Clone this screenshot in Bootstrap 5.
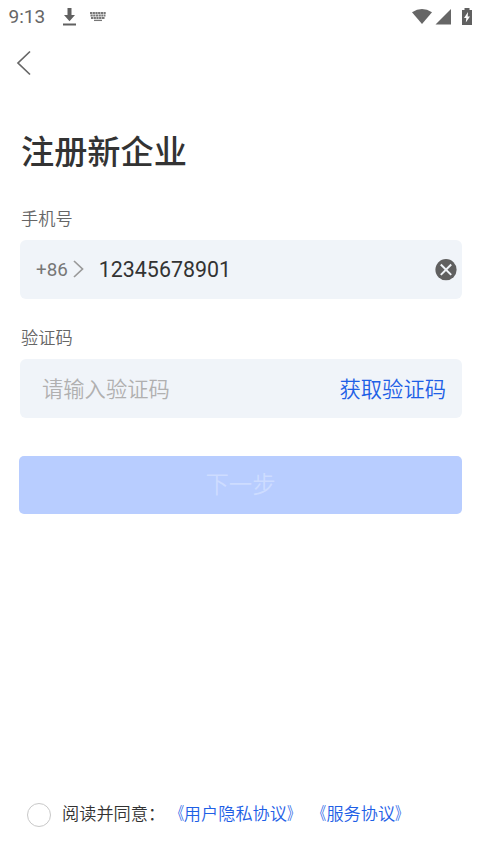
<!DOCTYPE html>
<html lang="zh-CN">
<head>
<meta charset="utf-8">
<meta name="viewport" content="width=device-width, initial-scale=1">
<title>注册新企业</title>
<link href="https://cdn.jsdelivr.net/npm/bootstrap@5.3.0/dist/css/bootstrap.min.css" rel="stylesheet">
<style>
body{font-family:Roboto,"Noto Sans CJK SC",sans-serif;color:#333;background:#fff;height:853px;overflow:hidden}
svg{display:block;flex:none}
.status-bar{height:33px;padding:0 7px 0 8.500px;color:#666}
.clock{font-size:19px;line-height:36px;width:52px}
.keyboard{margin-left:12px}
.wifi{margin-right:2px}
.signal{margin-right:9px}
.top-bar{height:60px;padding-left:16px}
.main-form{padding:0 18px 0 20px}
.page-title{font-size:33.2px;line-height:48px;font-weight:500;margin:36px 0 0;padding-left:1px}
.field-label{font-size:17.2px;line-height:24px;font-weight:350;color:#666;padding-left:1px;margin-bottom:9px}
.phone-label{margin-top:30px}
.code-label{margin-top:27px}
.field{height:59px;background:#f0f4f9;border-radius:6px}
.field input{font-size:21.4px;line-height:32px;color:#333}
.field input::placeholder{color:#b0b0b0;opacity:1;font-weight:350}
.phone-field{padding:0 5px 0 16px}
.phone-field input{min-width:0;margin-left:15px}
.area-code{font-size:18.8px;line-height:26px;color:#777;padding-top:1px}
.code-arrow{margin-left:5px;margin-bottom:2px}
.code-field{padding:3px 16px 0 22px}
.code-field input{width:220px;font-size:21.3px}
.get-code{font-size:21.3px;line-height:32px;font-weight:350;color:#1e60e6}
.next-step{width:443px;height:58px;font-size:23.4px;line-height:32px;font-weight:350;border-radius:5px;margin:38px 0 0 -1px}
.next-step:disabled{color:#cddcff;background:#b8cdff;opacity:1}
.agreement{font-size:17.2px;line-height:24px;font-weight:350;color:#333;padding:0 0 26px 27px}
.agreement label,.agreement a{margin-top:-2px}
.agreement a{color:#1e60e6;margin-left:1.500px}
.agreement a+a{margin-left:5px}
.quote-mark{display:inline-block;transform:scaleX(.75)}
.quote-open{transform-origin:100% 50%}
.quote-close{transform-origin:0 50%}
.agree-check{width:24px;height:24px;border:1px solid #c8c8c8;margin:0 11px 0 0}
</style>
</head>
<body class="d-flex flex-column">
<header>
  <div class="status-bar d-flex align-items-center">
    <span class="clock">9:13</span>
    <svg width="16" height="20" viewBox="0 0 16 20" fill="#606060"><path d="M6.500 1h4v7H14L8.500 14.300 3 8h3.500zM2 16.500h13v2H2z"/></svg>
    <svg class="keyboard me-auto" width="18" height="11" viewBox="0 0 18 11" fill="none" stroke="#777"><path d="M1 2h16M1.500 4.500h15M2 7h14" stroke-width="1.800" stroke-dasharray="2.200 .5"/><path d="M5 9.400h8" stroke-width="1.300"/></svg>
    <svg class="wifi" width="22" height="18" viewBox="0 0 22 18" fill="#666"><path d="M1 4.200Q11-2.300 21 4.200L11 16z"/></svg>
    <svg class="signal" width="17" height="17" viewBox="0 0 17 17" fill="#666"><path d="M16 1v15.500H.500z"/></svg>
    <svg width="12" height="18" viewBox="0 0 12 18"><path fill="#606060" d="M3.500 0h5v2H11v15H1V2h2.500z"/><path fill="#fff" d="M7 4 3 10h2.300l-.5 4.500 4.200-6H6.700z"/></svg>
  </div>
  <nav class="top-bar d-flex align-items-center">
    <button type="button" class="btn p-0 border-0" aria-label="返回"><svg width="16" height="26" viewBox="0 0 16 26" fill="none" stroke="#666" stroke-width="1.700"><path d="M14 1.500 2 13l12 11.500"/></svg></button>
  </nav>
</header>
<main class="main-form">
  <h1 class="page-title">注册新企业</h1>
  <form>
    <label class="field-label phone-label d-block" for="phone">手机号</label>
    <div class="field phone-field d-flex align-items-center">
      <span class="area-code">+86</span>
      <svg class="code-arrow" width="11" height="18" viewBox="0 0 11 18" fill="none" stroke="#999" stroke-width="1.700"><path d="m1 1 8.500 8L1 17"/></svg>
      <input id="phone" type="tel" class="flex-grow-1 border-0 bg-transparent p-0" value="12345678901">
      <svg width="22" height="22" viewBox="0 0 22 22"><circle cx="11" cy="10.700" r="10.600" fill="#606060"/><path d="m5.800 5.500 10.400 10.400m0-10.400L5.800 15.900" stroke="#f0f4f9" stroke-width="2"/></svg>
    </div>
    <label class="field-label code-label d-block" for="code">验证码</label>
    <div class="field code-field d-flex align-items-center justify-content-between">
      <input id="code" type="text" class="border-0 bg-transparent p-0" placeholder="请输入验证码">
      <button type="button" class="btn get-code p-0 border-0">获取验证码</button>
    </div>
    <button type="submit" class="btn next-step d-block border-0 p-0" disabled>下一步</button>
  </form>
</main>
<footer class="agreement mt-auto d-flex align-items-center">
  <input type="checkbox" class="form-check-input agree-check rounded-circle" id="agree">
  <label for="agree">阅读并同意：</label><a href="#" class="text-decoration-none"><span class="quote-mark quote-open">《</span>用户隐私协议<span class="quote-mark quote-close">》</span></a><a href="#" class="text-decoration-none"><span class="quote-mark quote-open">《</span>服务协议<span class="quote-mark quote-close">》</span></a>
</footer>
<script src="https://cdn.jsdelivr.net/npm/bootstrap@5.3.0/dist/js/bootstrap.bundle.min.js"></script>
</body>
</html>
